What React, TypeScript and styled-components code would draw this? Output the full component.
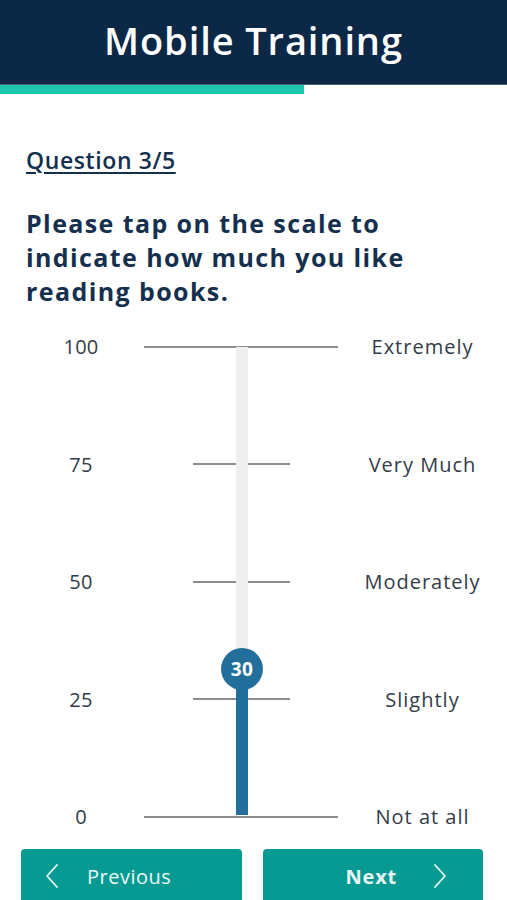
import React from 'react';
import styled, { createGlobalStyle } from 'styled-components';

const GlobalStyle = createGlobalStyle`
  html, body {
    margin: 0;
    padding: 0;
    overflow: hidden;
    background: #ffffff;
  }
  body {
    font-family: 'Open Sans', 'Noto Sans', sans-serif;
  }
`;

const NAVY = '#0b2847';
const TEAL = '#079a92';
const BLUE = '#226f9b';

const Screen = styled.div`
  width: 507px;
  height: 900px;
  overflow: hidden;
`;

const Header = styled.header`
  height: 84px;
  background: ${NAVY};
  border-bottom: 1px solid #4d5f73;
  display: flex;
  align-items: center;
  justify-content: center;
`;

const Title = styled.h1`
  margin: 0 0 4px;
  color: #ffffff;
  font-size: 38px;
  font-weight: 600;
  letter-spacing: 0.9px;
`;

const Progress = styled.div`
  height: 9px;
  background: #ffffff;
`;

const ProgressFill = styled.div<{ $pct: number }>`
  height: 100%;
  width: ${p => p.$pct}%;
  background: #1ec6b0;
`;

const Body = styled.main`
  padding: 0 24px 0 26px;
  color: #14304e;
`;

const QuestionNo = styled.h2`
  margin: 50px 0 0;
  font-size: 23px;
  font-weight: 600;
  text-decoration: underline;
  text-underline-offset: 3px;
  text-decoration-thickness: 2px;
  letter-spacing: 0.6px;
`;

const Prompt = styled.p`
  margin: 30px 0 0;
  font-size: 25px;
  line-height: 34px;
  font-weight: 700;
  letter-spacing: 1.4px;
`;

const Scale = styled.div`
  position: relative;
  margin-top: 25px;
  display: flex;
  flex-direction: column;
  gap: 93.5px;
`;

const Row = styled.div`
  height: 24px;
  display: grid;
  grid-template-columns: 144px 194px 1fr;
  align-items: center;
`;

const LeftLabel = styled.span`
  padding-left: 18px;
  text-align: center;
  font-size: 20px;
  letter-spacing: 0.3px;
  color: #323c47;
`;

const TickCell = styled.div`
  display: flex;
  justify-content: center;
`;

const Tick = styled.div<{ $full: boolean }>`
  height: 2px;
  width: ${p => (p.$full ? '194px' : '97px')};
  background: #8d8d8d;
`;

const RightLabel = styled.span`
  text-align: center;
  font-size: 20px;
  letter-spacing: 1px;
  color: #323c47;
`;

const Track = styled.div`
  position: absolute;
  left: 236px;
  top: 14px;
  bottom: 12px;
  width: 12px;
  background: #efefef;
`;

const Fill = styled.div`
  position: absolute;
  left: 0;
  right: 0;
  bottom: 0;
  background: ${BLUE};
`;

const Knob = styled.div`
  position: absolute;
  left: 50%;
  width: 42px;
  height: 42px;
  margin-left: -21px;
  margin-top: -27px;
  border-radius: 50%;
  background: ${BLUE};
  color: #ffffff;
  font-size: 19px;
  font-weight: 700;
  display: flex;
  align-items: center;
  justify-content: center;
  letter-spacing: 0.5px;
`;

const Footer = styled.nav`
  margin-top: 22px;
  display: grid;
  grid-template-columns: 1fr 1fr;
  gap: 21px;
  padding: 0 24px 0 21px;
`;

const NavButton = styled.button<{ $primary?: boolean }>`
  height: 62px;
  border: none;
  border-radius: 4px;
  background: ${TEAL};
  color: #e9f8f6;
  font-family: inherit;
  font-size: 20px;
  font-weight: ${p => (p.$primary ? 700 : 400)};
  letter-spacing: ${p => (p.$primary ? '0.8px' : '0.5px')};
  display: flex;
  align-items: center;
  padding: 0 0 8px;
  justify-content: ${p => (p.$primary ? 'flex-end' : 'flex-start')};
  gap: ${p => (p.$primary ? '36px' : '28px')};
  ${p => (p.$primary ? 'padding-right: 36px;' : 'padding-left: 24px;')}
`;

const Chevron = ({ dir }: { dir: 'left' | 'right' }) => (
  <svg width="14" height="26" viewBox="0 0 14 26" fill="none">
    <path
      d={dir === 'left' ? 'M12 2 L2 13 L12 24' : 'M2 2 L12 13 L2 24'}
      stroke="#e9f8f6"
      strokeWidth="1.8"
      strokeLinecap="round"
      strokeLinejoin="round"
    />
  </svg>
);

const LEVELS = [
  { value: 100, label: 'Extremely' },
  { value: 75, label: 'Very Much' },
  { value: 50, label: 'Moderately' },
  { value: 25, label: 'Slightly' },
  { value: 0, label: 'Not at all' },
];

export default function App() {
  const answer = 30;
  return (
    <Screen>
      <GlobalStyle />
      <Header>
        <Title>Mobile Training</Title>
      </Header>
      <Progress>
        <ProgressFill $pct={60} />
      </Progress>
      <Body>
        <QuestionNo>Question 3/5</QuestionNo>
        <Prompt>
          Please tap on the scale to indicate how much you like reading books.
        </Prompt>
      </Body>
      <Scale>
        {LEVELS.map(level => (
          <Row key={level.value}>
            <LeftLabel>{level.value}</LeftLabel>
            <TickCell>
              <Tick $full={level.value === 100 || level.value === 0} />
            </TickCell>
            <RightLabel>{level.label}</RightLabel>
          </Row>
        ))}
        <Track>
          <Fill style={{ height: `${answer}%` }}>
            <Knob>{answer}</Knob>
          </Fill>
        </Track>
      </Scale>
      <Footer>
        <NavButton>
          <Chevron dir="left" />
          Previous
        </NavButton>
        <NavButton $primary>
          Next
          <Chevron dir="right" />
        </NavButton>
      </Footer>
    </Screen>
  );
}
